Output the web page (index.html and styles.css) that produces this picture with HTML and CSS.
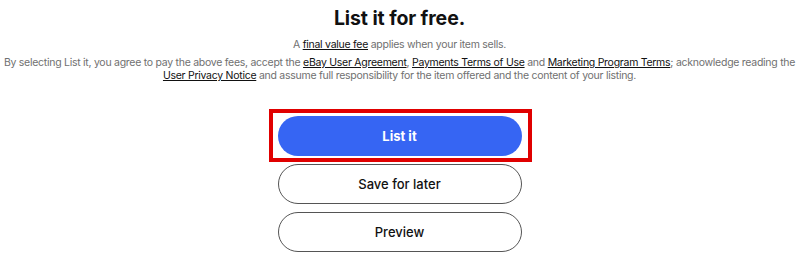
FILE: index.html
```html
<!DOCTYPE html>
<html lang="en">
<head>
<meta charset="utf-8">
<title>List it for free</title>
<link rel="stylesheet" href="styles.css">
</head>
<body>
<main class="page">
  <h1 class="title">List it for free.</h1>
  <p class="fee">A <a href="#">final value fee</a> applies when your item sells.</p>
  <p class="legal">By selecting List it, you agree to pay the above fees, accept the <a href="#">eBay User Agreement</a>, <a href="#">Payments Terms of Use</a> and <a href="#">Marketing Program Terms</a>; acknowledge reading the <a href="#">User Privacy Notice</a> and assume full responsibility for the item offered and the content of your listing.</p>
  <div class="actions">
    <div class="primary-wrap">
      <button class="btn btn-primary" type="button">List it</button>
      <span class="highlight" aria-hidden="true"></span>
    </div>
    <button class="btn btn-secondary" type="button">Save for later</button>
    <button class="btn btn-secondary" type="button">Preview</button>
  </div>
</main>
</body>
</html>
```
FILE: styles.css
```css
* { box-sizing: border-box; }
html, body { margin: 0; padding: 0; background: #fff; }
body {
  font-family: Inter, "Noto Sans", "Liberation Sans", sans-serif;
  color: #191919;
}
.page {
  display: flex;
  flex-direction: column;
  align-items: center;
  text-align: center;
  padding: 5px 1px 0 0;
}
.title {
  margin: 0;
  font-size: 19.5px;
  line-height: 26px;
  font-weight: 700;
  letter-spacing: -0.1px;
  color: #111;
}
.fee, .legal {
  margin: 0;
  font-size: 10.5px;
  line-height: 13px;
  letter-spacing: -0.27px;
  color: #707070;
}
.fee { margin-top: 7px; }
.legal { margin-top: 5px; }
.fee a, .legal a {
  color: #111;
  text-decoration: underline;
}
.actions {
  display: flex;
  flex-direction: column;
  gap: 8px;
  width: 244px;
  margin-top: 34px;
}
.primary-wrap { position: relative; }
.btn {
  display: block;
  width: 100%;
  height: 40px;
  border-radius: 20px;
  font-family: inherit;
  font-size: 13px;
  font-weight: 500;
  cursor: pointer;
}
.btn-primary {
  background: #3665f3;
  border: none;
  color: #fff;
  font-weight: 700;
}
.btn-secondary {
  background: #fff;
  border: 1px solid #555;
  color: #111;
}
.highlight {
  position: absolute;
  top: -7px;
  left: -9px;
  right: -10px;
  bottom: -6px;
  border: 4px solid #e00000;
  pointer-events: none;
}
```
